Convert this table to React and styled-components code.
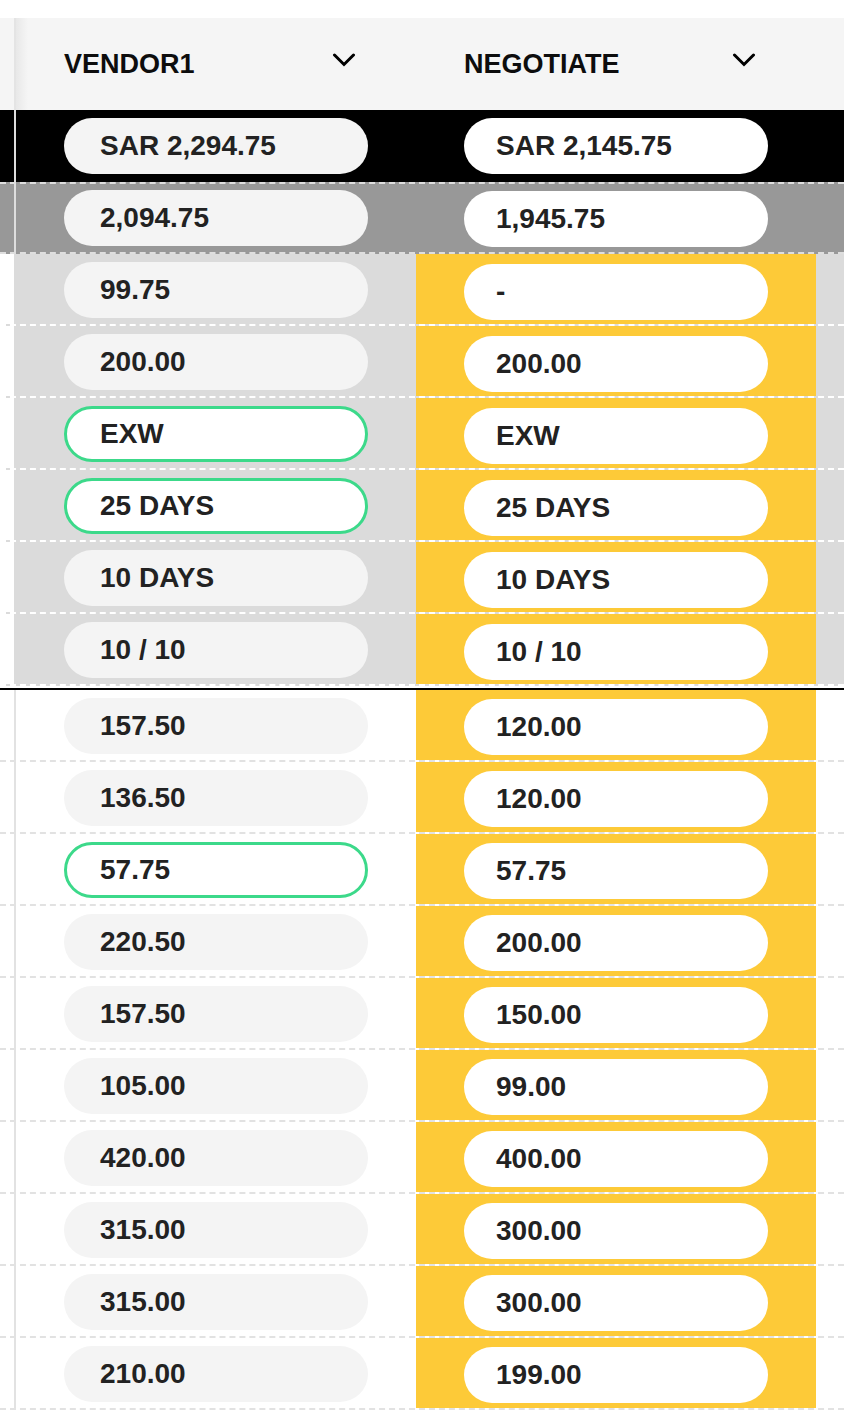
import styled, { createGlobalStyle } from 'styled-components';

const GlobalStyle = createGlobalStyle`
	html, body {
		margin: 0;
		padding: 0;
		background: #ffffff;
	}
	* {
		box-sizing: border-box;
	}
`;

const tones = {
	head: { bg: '#f5f5f5', stub: '#f5f5f5', line: '#e4e4e4' },
	total: { bg: '#000000', stub: '#000000', line: '#dedede' },
	sub: { bg: '#989898', stub: '#989898', line: '#dedede' },
	section: { bg: '#dbdbdb', stub: '#ffffff', line: '#dbdbdb' },
	plain: { bg: '#ffffff', stub: '#ffffff', line: '#e2e2e2' }
};

const Page = styled.div`
	width: 844px;
	padding-top: 18px;
	overflow: hidden;
	font-family: 'Liberation Sans', Arial, Helvetica, sans-serif;
`;

const Row = styled.div`
	display: grid;
	grid-template-columns: 16px 400px 400px 1fr;
	height: ${(p) => p.$height || 72}px;
	background: ${(p) => tones[p.$tone].bg};
	border-top: ${(p) => (p.$dashTop ? `2px dashed ${p.$dashTop}` : 'none')};
	border-bottom: ${(p) => (p.$dashBottom ? `2px dashed ${p.$dashBottom}` : 'none')};
`;

const Stub = styled.div`
	background: ${(p) => tones[p.$tone].stub};
	border-right: 2px solid ${(p) => tones[p.$tone].line};
`;

const Cell = styled.div`
	padding: ${(p) => p.$top || 8}px 0 0 48px;
	background: ${(p) => (p.$yellow ? '#fdca38' : 'transparent')};
`;

const Section = styled.div`
	padding-bottom: 2px;
	border-bottom: 2px solid #000;
	background: #ffffff;
`;

const HeaderCell = styled.div`
	display: flex;
	align-items: center;
	justify-content: space-between;
	padding: 0 60px 0 48px;
	background: ${(p) =>
		p.$shade ? 'linear-gradient(90deg, #e8e8e8 0px, #f5f5f5 12px)' : '#f5f5f5'};
`;

const HeaderLabel = styled.span`
	font-size: 27px;
	font-weight: 700;
	color: #0d0d0d;
`;

const Chevron = styled.svg`
	width: 24px;
	height: 14px;
	margin-bottom: 8px;
`;

const Pill = styled.div`
	width: 304px;
	height: 56px;
	border-radius: 28px;
	display: flex;
	align-items: center;
	padding-left: ${(p) => (p.$light ? 32 : 36)}px;
	background: ${(p) => (p.$light || p.$picked ? '#ffffff' : '#f4f4f4')};
	border: ${(p) => (p.$picked ? '3px solid #3cd98a' : 'none')};
	padding-left: ${(p) => (p.$picked ? 33 : p.$light ? 32 : 36)}px;
	font-size: 28px;
	font-weight: 700;
	color: #222222;
	white-space: nowrap;
`;

const ChevronDown = () => (
	<Chevron viewBox="0 0 24 14">
		<polyline
			points="2.5,2 12,11.5 21.5,2"
			fill="none"
			stroke="#000"
			strokeWidth="3"
			strokeLinecap="round"
			strokeLinejoin="miter"
		/>
	</Chevron>
);

const sectionRows = [
	['99.75', '-'],
	['200.00', '200.00'],
	['EXW', 'EXW', true],
	['25 DAYS', '25 DAYS', true],
	['10 DAYS', '10 DAYS'],
	['10 / 10', '10 / 10']
];

const lineRows = [
	['157.50', '120.00'],
	['136.50', '120.00'],
	['57.75', '57.75', true],
	['220.50', '200.00'],
	['157.50', '150.00'],
	['105.00', '99.00'],
	['420.00', '400.00'],
	['315.00', '300.00'],
	['315.00', '300.00'],
	['210.00', '199.00']
];

const App = () => {
	return (
		<>
			<GlobalStyle />
			<Page>
				<Row $tone="head" $height={92}>
					<Stub $tone="head" />
					<HeaderCell $shade>
						<HeaderLabel>VENDOR1</HeaderLabel>
						<ChevronDown />
					</HeaderCell>
					<HeaderCell>
						<HeaderLabel>NEGOTIATE</HeaderLabel>
						<ChevronDown />
					</HeaderCell>
					<HeaderCell />
				</Row>

				<Row $tone="total">
					<Stub $tone="total" />
					<Cell>
						<Pill>SAR 2,294.75</Pill>
					</Cell>
					<Cell>
						<Pill $light>SAR 2,145.75</Pill>
					</Cell>
					<div />
				</Row>

				<Row $tone="sub" $dashTop="#dedede" $dashBottom="#dedede">
					<Stub $tone="sub" />
					<Cell $top={6}>
						<Pill>2,094.75</Pill>
					</Cell>
					<Cell $top={7}>
						<Pill $light>1,945.75</Pill>
					</Cell>
					<div />
				</Row>

				<Section>
					{sectionRows.map(([vendor, offer, picked], i) => (
						<Row key={i} $tone="section" $dashBottom="#ffffff">
							<Stub $tone="section" />
							<Cell>
								<Pill $picked={picked}>{vendor}</Pill>
							</Cell>
							<Cell $yellow $top={10}>
								<Pill $light>{offer}</Pill>
							</Cell>
							<div />
						</Row>
					))}
				</Section>

				{lineRows.map(([vendor, offer, picked], i) => (
					<Row key={i} $tone="plain" $dashBottom="#e2e2e2">
						<Stub $tone="plain" />
						<Cell>
							<Pill $picked={picked}>{vendor}</Pill>
						</Cell>
						<Cell $yellow $top={9}>
							<Pill $light>{offer}</Pill>
						</Cell>
						<div />
					</Row>
				))}
			</Page>
		</>
	);
};

export default App;
